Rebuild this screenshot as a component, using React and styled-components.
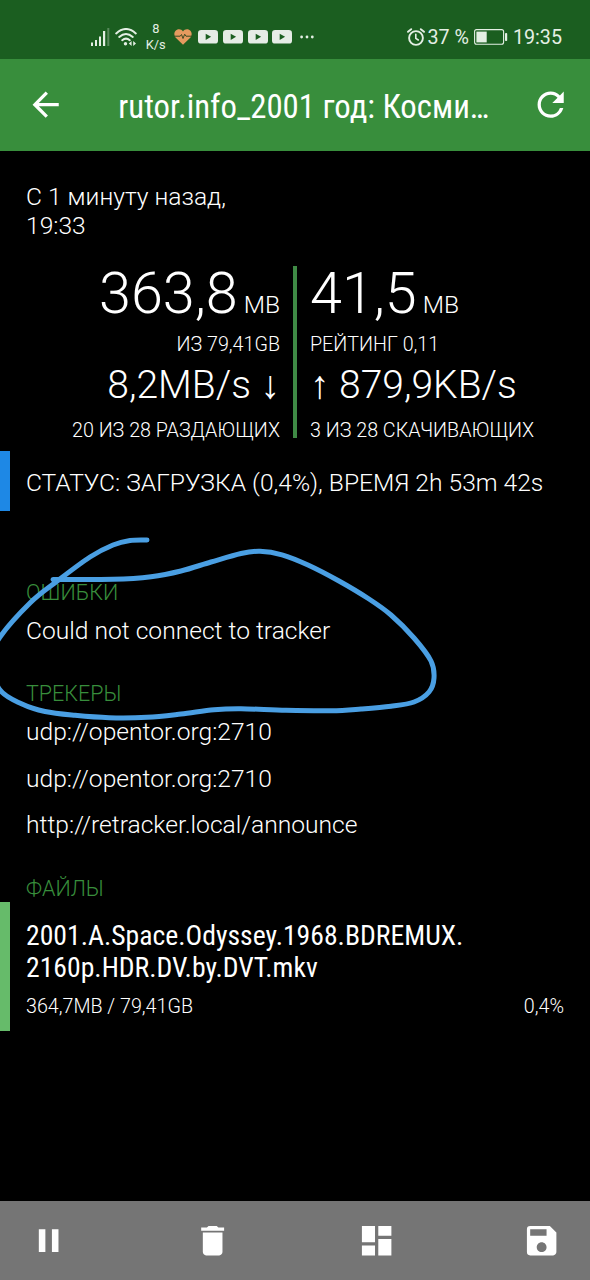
import React from "react";
import styled, { createGlobalStyle } from "styled-components";
import {
  MdArrowBack,
  MdRefresh,
  MdPause,
  MdDelete,
  MdDashboard,
  MdSave,
} from "react-icons/md";

const GlobalStyle = createGlobalStyle`
  * {
    box-sizing: border-box;
  }
  body {
    margin: 0;
    background: #000;
    color: #fff;
    font-family: Roboto, sans-serif;
    font-weight: 300;
  }
`;

const Screen = styled.div`
  position: relative;
  display: flex;
  flex-direction: column;
  width: 590px;
  height: 1280px;
  overflow: hidden;
  background: #000;
`;

const StatusBar = styled.div`
  display: flex;
  align-items: center;
  height: 59px;
  padding: 14px 28px 0 91px;
  background: #1b5e20;
  color: #e4efe4;
  font-weight: 400;
  font-size: 19.7px;
  white-space: nowrap;

  svg {
    display: block;
    flex: none;
  }
`;

const StatusGroup = styled.div`
  display: flex;
  align-items: center;
  gap: ${(props) => props.$gap || 0}px;
  margin-left: ${(props) => props.$left || 0}px;
`;

const NetSpeed = styled.div`
  width: 22px;
  margin-left: 8px;
  font-size: 12.8px;
  line-height: 16px;
  text-align: center;
`;

const StatusText = styled.span`
  margin-left: ${(props) => props.$left}px;
  padding-top: 2px;
  line-height: 24px;
`;

const AppBar = styled.header`
  display: flex;
  align-items: center;
  height: 92px;
  padding: 0 20px 0 26px;
  background: #388e3c;

  svg {
    flex: none;
  }
`;

const Title = styled.h1`
  flex: 1;
  margin: 3px 0 0 53px;
  font-family: "Roboto Condensed", Roboto, sans-serif;
  font-size: 32.8px;
  font-weight: 400;
  line-height: 40px;
  white-space: nowrap;
`;

const Content = styled.main`
  flex: 1;
  white-space: nowrap;
`;

const Started = styled.p`
  margin: 31px 0 0 26px;
  font-size: 24.6px;
  line-height: 29px;
`;

const Stats = styled.section`
  display: grid;
  grid-template-columns: 280px 4px 1fr;
  column-gap: 13px;
  height: 172px;
  margin-top: 26px;
`;

const Divider = styled.div`
  height: 172px;
  background: #3f8a45;
`;

const Column = styled.div`
  text-align: ${(props) => props.$align || "left"};
`;

const Total = styled.div`
  height: 57px;
  font-size: 57.5px;
  line-height: 55px;

  small {
    margin-left: 6px;
    font-size: 24.6px;
    line-height: 0;
  }
`;

const Note = styled.div`
  margin-top: ${(props) => props.$top}px;
  font-size: 19.7px;
  line-height: 24px;
`;

const Speed = styled.div`
  height: 46px;
  margin-top: 5px;
  font-size: 39px;
  line-height: 46px;
`;

const Arrow = styled.span`
  font-family: "Liberation Sans", sans-serif;
  font-size: 39px;
  line-height: 0;
`;

const StatusRow = styled.div`
  height: 60px;
  margin-top: 13px;
  padding-left: 16px;
  border-left: 10px solid #1e88e5;
  font-size: 24.6px;
  line-height: 63px;
`;

const SectionTitle = styled.h2`
  margin: ${(props) => props.$top}px 0 0 26px;
  color: #388e3c;
  font-size: 21.5px;
  font-weight: 300;
  line-height: 24px;
`;

const Item = styled.div`
  height: 46.4px;
  padding-left: 26px;
  font-size: 24.6px;
  line-height: 51px;
`;

const FileRow = styled.div`
  height: 129px;
  margin-top: 1px;
  padding: 18px 26px 0 16px;
  border-left: 10px solid #66bb6a;
`;

const FileName = styled.div`
  font-family: "Roboto Condensed", Roboto, sans-serif;
  font-size: 27.7px;
  font-weight: 400;
  line-height: 32px;
`;

const FileInfo = styled.div`
  display: flex;
  justify-content: space-between;
  margin-top: 11px;
  font-size: 19.7px;
  line-height: 24px;
`;

const BottomBar = styled.nav`
  display: flex;
  align-items: center;
  justify-content: space-between;
  height: 79px;
  padding: 0 29px;
  background: #757575;
`;

const Scribble = styled.svg`
  position: absolute;
  top: 0;
  left: 0;
  pointer-events: none;
`;

const TRACKERS = [
  "udp://opentor.org:2710",
  "udp://opentor.org:2710",
  "http://retracker.local/announce",
];

const STROKE = [
  [147, 540], [130, 540.5], [113, 545], [90, 557], [56, 582], [30, 603],
  [0, 637], [-10, 660], [0, 690], [22, 704], [45, 711.5], [75, 715.3],
  [109, 717.7], [147, 717.3], [181, 714], [214, 709.7], [241, 708.7],
  [286, 710.3], [331, 710.7], [361, 709], [391, 706.3], [414, 702],
  [429, 692], [434, 678], [431, 661], [414, 638], [391, 615], [369, 599],
  [339, 581], [308, 565], [282, 554.8], [260, 551.3], [241, 553.5],
  [211, 562], [181, 571], [151, 576.7], [113, 579.3], [53, 579.5],
];

// smooth curve through every point
const toPath = (pts) => {
  let d = `M${pts[0]}`;
  for (let i = 0; i < pts.length - 1; i++) {
    const a = pts[i - 1] || pts[i];
    const b = pts[i];
    const c = pts[i + 1];
    const e = pts[i + 2] || c;
    d += `C${b[0] + (c[0] - a[0]) / 6},${b[1] + (c[1] - a[1]) / 6}`;
    d += ` ${c[0] - (e[0] - b[0]) / 6},${c[1] - (e[1] - b[1]) / 6} ${c}`;
  }
  return d;
};

const SignalIcon = () => (
  <svg width="19" height="18" viewBox="0 0 19 18" fill="currentColor">
    <rect x="0" y="14.5" width="2" height="3.5" />
    <rect x="4" y="12" width="2" height="6" />
    <rect x="8" y="8.5" width="2" height="9.5" />
    <rect x="12" y="3" width="2.2" height="15" />
    <rect x="16.3" y="0" width="2" height="18" opacity="0.3" />
  </svg>
);

const WifiIcon = () => (
  <svg width="22" height="18" viewBox="0 0 22 18" fill="none" stroke="currentColor" strokeWidth="2" strokeLinecap="round">
    <path d="M1.2 5.4Q11-3.4 20.8 5.4" />
    <path d="M4.2 8.9Q11 3 17.8 8.9" />
    <path d="M7.2 12.2Q11 9 14.8 12.2" />
    <circle cx="10.5" cy="15.8" r="1.7" fill="currentColor" stroke="none" />
    <path d="M16.6 13v5l-2.8-2.5zM18.2 13v5l2.8-2.5z" fill="currentColor" stroke="none" />
  </svg>
);

const HeartIcon = () => (
  <svg width="18" height="16" viewBox="0 0 18 16">
    <path d="M9 15.8L1.5 8.4C-.6 5.8.2 2 3 .7 5.3-.2 7.8.4 9 2.5 10.2.4 12.7-.2 15 .7 17.8 2 18.6 5.8 16.5 8.4Z" fill="#e59a5f" />
    <path d="M0 7.2H6.2L7.5 5.5 9 9.5 10.7 5.2 12 7.2H18" fill="none" stroke="#3c4a22" strokeWidth="1" />
  </svg>
);

const YoutubeIcon = () => (
  <svg width="20" height="14" viewBox="0 0 20 14">
    <rect width="20" height="13.6" rx="3.2" fill="#e6ece6" />
    <path d="M7.7 3.7v6.2l5.4-3.1z" fill="#1b5e20" />
  </svg>
);

const DotsIcon = () => (
  <svg width="14" height="4" viewBox="0 0 14 4" fill="currentColor">
    <circle cx="1.6" cy="2" r="1.4" />
    <circle cx="7" cy="2" r="1.4" />
    <circle cx="12.3" cy="2" r="1.4" />
  </svg>
);

const AlarmIcon = () => (
  <svg width="18" height="18" viewBox="0 0 18 18" fill="none" stroke="currentColor" strokeWidth="1.9" strokeLinecap="round">
    <circle cx="9" cy="10" r="6.9" />
    <path d="M8.8 6.3V10.3L11.3 12" strokeWidth="1.6" />
    <path d="M1 3.8L4.2 1.2M17 3.8L13.8 1.2" />
  </svg>
);

const BatteryIcon = () => (
  <svg width="34" height="16" viewBox="0 0 34 16" fill="currentColor">
    <rect x="0.6" y="0.6" width="29" height="14.6" rx="2" fill="none" stroke="currentColor" strokeWidth="1.1" />
    <rect x="2.4" y="2.6" width="10.3" height="10.8" />
    <rect x="31" y="4" width="2.2" height="8" rx="0.8" />
  </svg>
);

const App = () => {
  return (
    <Screen>
      <GlobalStyle />
      <StatusBar>
        <SignalIcon />
        <StatusGroup $left={5}>
          <WifiIcon />
        </StatusGroup>
        <NetSpeed>
          8<br />
          K/s
        </NetSpeed>
        <StatusGroup $left={8}>
          <HeartIcon />
        </StatusGroup>
        <StatusGroup $left={6} $gap={4.6}>
          <YoutubeIcon />
          <YoutubeIcon />
          <YoutubeIcon />
          <YoutubeIcon />
        </StatusGroup>
        <StatusGroup $left={7.3}>
          <DotsIcon />
        </StatusGroup>
        <StatusGroup $left={93}>
          <AlarmIcon />
          <StatusText $left={3}>37 %</StatusText>
        </StatusGroup>
        <StatusGroup $left={5}>
          <BatteryIcon />
          <StatusText $left={5}>19:35</StatusText>
        </StatusGroup>
      </StatusBar>

      <AppBar>
        <MdArrowBack size={39.3} />
        <Title>rutor.info_2001 год: Косми…</Title>
        <MdRefresh size={39.3} />
      </AppBar>

      <Content>
        <Started>
          С 1 минуту назад,
          <br />
          19:33
        </Started>

        <Stats>
          <Column $align="right">
            <Total>
              363,8<small>MB</small>
            </Total>
            <Note $top={10}>ИЗ 79,41GB</Note>
            <Speed>
              8,2MB/s <Arrow>↓</Arrow>
            </Speed>
            <Note $top={11}>20 ИЗ 28 РАЗДАЮЩИХ</Note>
          </Column>
          <Divider />
          <Column>
            <Total>
              41,5<small>MB</small>
            </Total>
            <Note $top={10}>РЕЙТИНГ 0,11</Note>
            <Speed>
              <Arrow>↑</Arrow> 879,9KB/s
            </Speed>
            <Note $top={11}>3 ИЗ 28 СКАЧИВАЮЩИХ</Note>
          </Column>
        </Stats>

        <StatusRow>СТАТУС: ЗАГРУЗКА (0,4%), ВРЕМЯ 2h 53m 42s</StatusRow>

        <SectionTitle $top={70}>ОШИБКИ</SectionTitle>
        <Item>Could not connect to tracker</Item>

        <SectionTitle $top={31}>ТРЕКЕРЫ</SectionTitle>
        {TRACKERS.map((url, i) => (
          <Item key={i}>{url}</Item>
        ))}

        <SectionTitle $top={31}>ФАЙЛЫ</SectionTitle>
        <FileRow>
          <FileName>
            2001.A.Space.Odyssey.1968.BDREMUX.
            <br />
            2160p.HDR.DV.by.DVT.mkv
          </FileName>
          <FileInfo>
            <span>364,7MB / 79,41GB</span>
            <span>0,4%</span>
          </FileInfo>
        </FileRow>
      </Content>

      <BottomBar>
        <MdPause size={39.3} />
        <MdDelete size={39.3} />
        <MdDashboard size={39.3} />
        <MdSave size={39.3} />
      </BottomBar>

      <Scribble width="590" height="1280" viewBox="0 0 590 1280">
        <path
          d={toPath(STROKE)}
          fill="none"
          stroke="#4a9fe3"
          strokeWidth="5"
          strokeLinecap="round"
          strokeLinejoin="round"
        />
      </Scribble>
    </Screen>
  );
};

export default App;
